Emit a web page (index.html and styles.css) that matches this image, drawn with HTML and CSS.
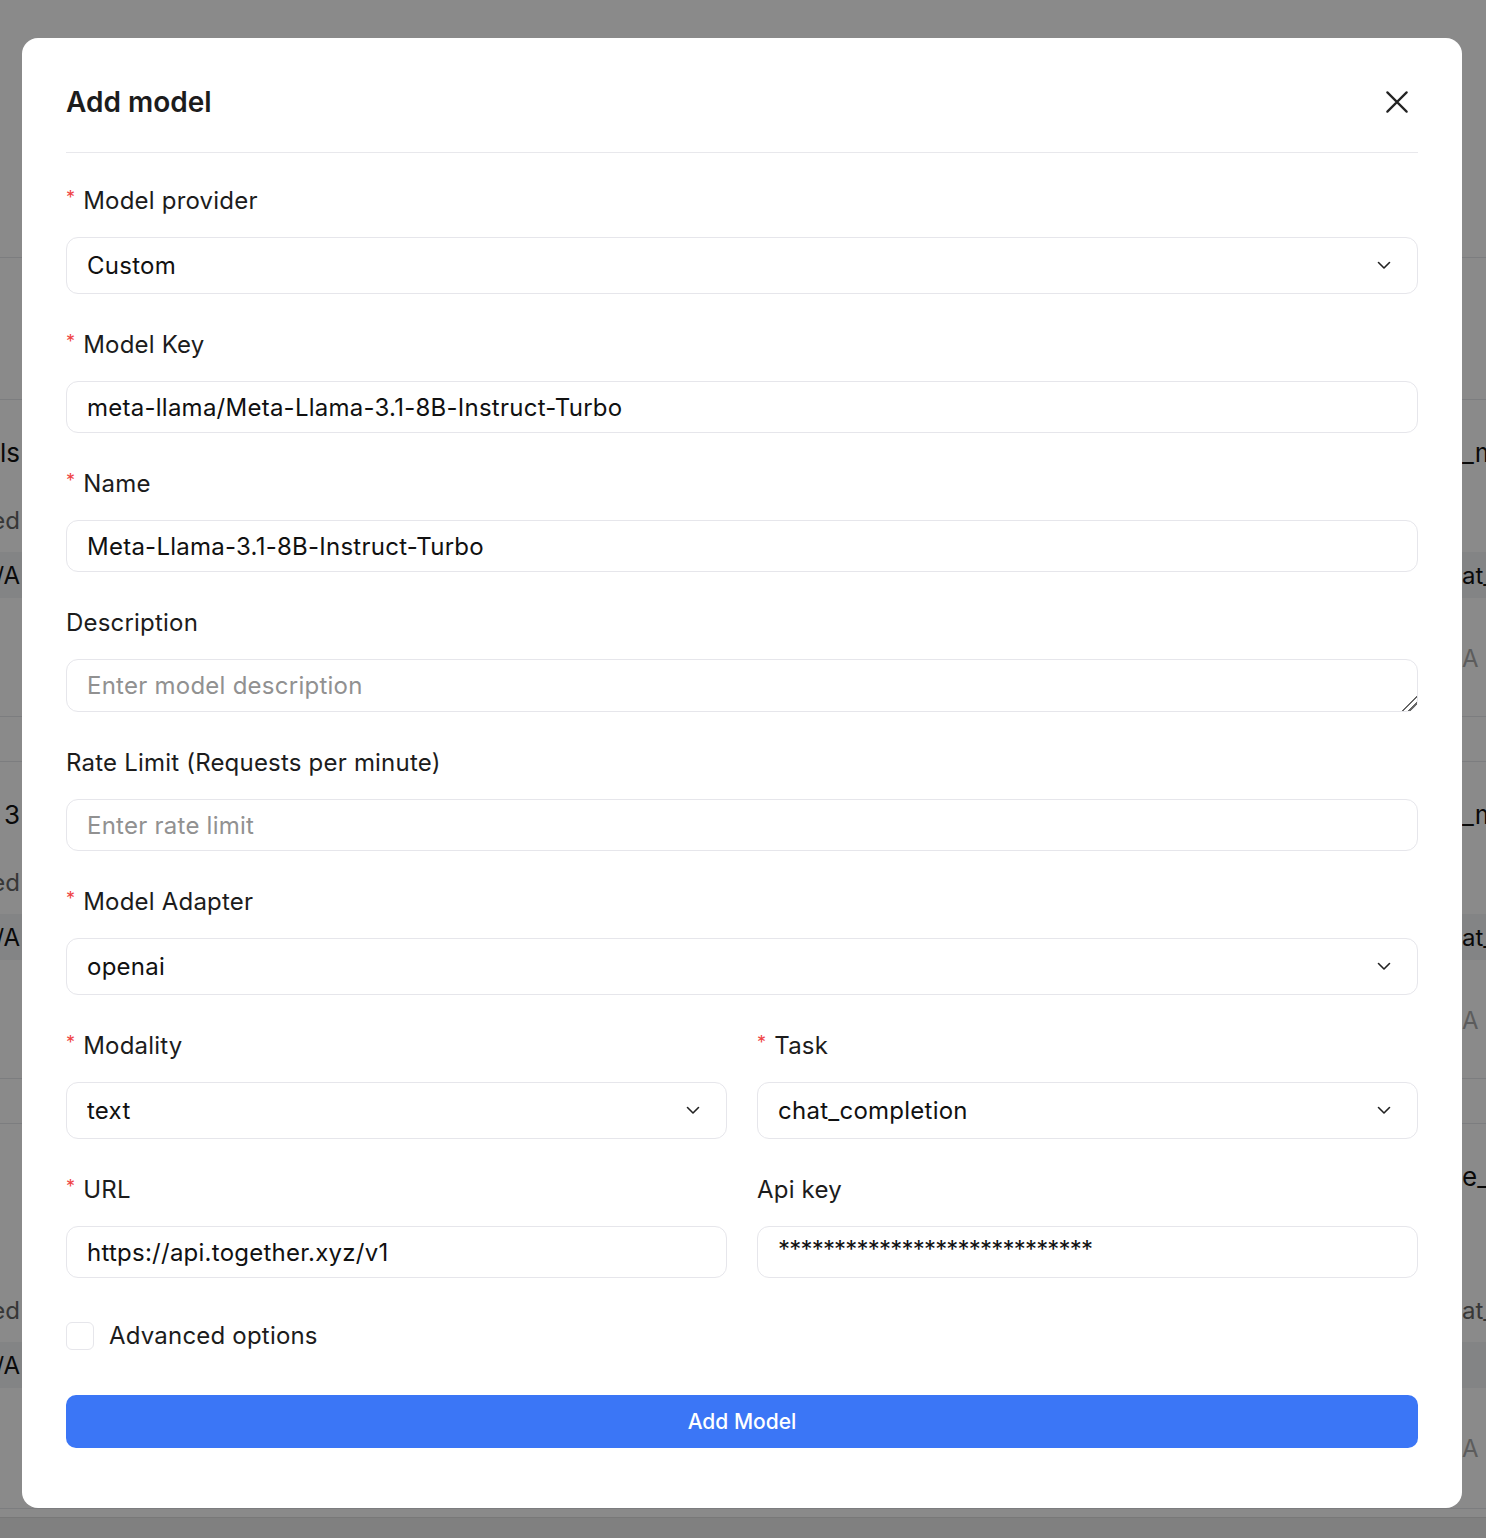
FILE: index.html
```html
<!DOCTYPE html>
<html lang="en">
<head>
    <meta charset="UTF-8">
    <meta name="viewport" content="width=device-width, initial-scale=1.0">
    <title>Add model</title>
    <link rel="stylesheet" href="styles.css">
</head>
<body>
    <!-- page behind the dialog -->
    <div class="page">
        <div class="page-top"></div>
        <div class="toolbar"></div>

        <div class="cards">
            <div class="card">
                <div class="bg-row bg-title">
                    <div class="edge-l"><span>Models</span></div>
                    <div class="edge-r"><span>_model</span></div>
                </div>
                <div class="bg-row bg-status">
                    <div class="edge-l"><span>Deployed</span></div>
                    <div class="edge-r"></div>
                </div>
                <div class="bg-row bg-band">
                    <div class="edge-l"><span>N/A</span></div>
                    <div class="edge-r"><span>at_completion</span></div>
                </div>
                <div class="bg-row bg-muted">
                    <div class="edge-l"></div>
                    <div class="edge-r"><span>A</span></div>
                </div>
            </div>
            <div class="card">
                <div class="bg-row bg-title">
                    <div class="edge-l"><span>Llama 3</span></div>
                    <div class="edge-r"><span>_model</span></div>
                </div>
                <div class="bg-row bg-status">
                    <div class="edge-l"><span>Deployed</span></div>
                    <div class="edge-r"></div>
                </div>
                <div class="bg-row bg-band">
                    <div class="edge-l"><span>N/A</span></div>
                    <div class="edge-r"><span>at_completion</span></div>
                </div>
                <div class="bg-row bg-muted">
                    <div class="edge-l"></div>
                    <div class="edge-r"><span>A</span></div>
                </div>
            </div>
            <div class="card card-tall">
                <div class="bg-row bg-title">
                    <div class="edge-l"></div>
                    <div class="edge-r"><span>e_model</span></div>
                </div>
                <div class="bg-row bg-spacer"></div>
                <div class="bg-row bg-status">
                    <div class="edge-l"><span>Deployed</span></div>
                    <div class="edge-r"><span>at_</span></div>
                </div>
                <div class="bg-row bg-band">
                    <div class="edge-l"><span>N/A</span></div>
                    <div class="edge-r"></div>
                </div>
                <div class="bg-row bg-muted">
                    <div class="edge-l"></div>
                    <div class="edge-r"><span>A</span></div>
                </div>
            </div>
        </div>
        <div class="page-foot"></div>
    </div>

    <div class="overlay">
        <div class="modal">
            <div class="modal-head">
                <h2 class="modal-title">Add model</h2>
                <button class="close-btn" type="button" aria-label="Close">
                    <svg width="24" height="24" viewBox="0 0 24 24" fill="none" stroke="#222" stroke-width="2.4" stroke-linecap="round">
                        <path d="M1.5 1.5L22.5 22.5M22.5 1.5L1.5 22.5"/>
                    </svg>
                </button>
            </div>

            <form class="modal-body">
                <div class="field">
                    <label class="label"><span class="req">*</span>Model provider</label>
                    <div class="select-wrap">
                        <select class="control select">
                            <option>Custom</option>
                        </select>
                        <svg class="chevron" width="16" height="16" viewBox="0 0 16 16" fill="none" stroke="#222" stroke-width="1.6" stroke-linecap="round" stroke-linejoin="round"><path d="M2.5 5.5L8 11l5.5-5.5"/></svg>
                    </div>
                </div>

                <div class="field">
                    <label class="label"><span class="req">*</span>Model Key</label>
                    <input class="control" type="text" value="meta-llama/Meta-Llama-3.1-8B-Instruct-Turbo">
                </div>

                <div class="field">
                    <label class="label"><span class="req">*</span>Name</label>
                    <input class="control" type="text" value="Meta-Llama-3.1-8B-Instruct-Turbo">
                </div>

                <div class="field">
                    <label class="label">Description</label>
                    <textarea class="control textarea" placeholder="Enter model description"></textarea>
                </div>

                <div class="field">
                    <label class="label">Rate Limit (Requests per minute)</label>
                    <input class="control" type="text" placeholder="Enter rate limit">
                </div>

                <div class="field">
                    <label class="label"><span class="req">*</span>Model Adapter</label>
                    <div class="select-wrap">
                        <select class="control select">
                            <option>openai</option>
                        </select>
                        <svg class="chevron" width="16" height="16" viewBox="0 0 16 16" fill="none" stroke="#222" stroke-width="1.6" stroke-linecap="round" stroke-linejoin="round"><path d="M2.5 5.5L8 11l5.5-5.5"/></svg>
                    </div>
                </div>

                <div class="field-row">
                    <div class="field">
                        <label class="label"><span class="req">*</span>Modality</label>
                        <div class="select-wrap">
                            <select class="control select">
                                <option>text</option>
                            </select>
                            <svg class="chevron" width="16" height="16" viewBox="0 0 16 16" fill="none" stroke="#222" stroke-width="1.6" stroke-linecap="round" stroke-linejoin="round"><path d="M2.5 5.5L8 11l5.5-5.5"/></svg>
                        </div>
                    </div>
                    <div class="field">
                        <label class="label"><span class="req">*</span>Task</label>
                        <div class="select-wrap">
                            <select class="control select">
                                <option>chat_completion</option>
                            </select>
                            <svg class="chevron" width="16" height="16" viewBox="0 0 16 16" fill="none" stroke="#222" stroke-width="1.6" stroke-linecap="round" stroke-linejoin="round"><path d="M2.5 5.5L8 11l5.5-5.5"/></svg>
                        </div>
                    </div>
                </div>

                <div class="field-row">
                    <div class="field">
                        <label class="label"><span class="req">*</span>URL</label>
                        <input class="control" type="text" value="https://api.together.xyz/v1">
                    </div>
                    <div class="field">
                        <label class="label">Api key</label>
                        <input class="control secret" type="text" value="****************************">
                    </div>
                </div>

                <label class="check-row">
                    <span class="checkbox"></span>
                    <span>Advanced options</span>
                </label>

                <button class="submit" type="button">Add Model</button>
            </form>
        </div>
    </div>
</body>
</html>
```

FILE: styles.css
```css
* {
    box-sizing: border-box;
}

body {
    margin: 0;
    height: 1538px;
    overflow: hidden;
    background: #fff;
    font-family: Inter, "Noto Sans", sans-serif;
    color: #1c1c1c;
}

/* background page */
.page {
    width: 100%;
}

.page-top {
    height: 258px;
    border-bottom: 1px solid #e5e7eb;
}

.toolbar {
    height: 141px;
}

.cards {
    display: flex;
    flex-direction: column;
    gap: 44px;
}

.card {
    height: 318px;
    border-top: 1px solid #e5e7eb;
    border-bottom: 1px solid #e5e7eb;
    padding-top: 34px;
}

.card-tall {
    height: 386px;
}

.bg-row {
    display: flex;
    justify-content: space-between;
    align-items: center;
    white-space: nowrap;
    overflow: hidden;
}

.edge-l {
    width: 20px;
    display: flex;
    justify-content: flex-end;
}

.edge-r {
    width: 24px;
    display: flex;
}

.bg-title {
    height: 36px;
    font-size: 26px;
    color: #111;
}

.bg-spacer {
    height: 66px;
}

.bg-status {
    height: 36px;
    margin-top: 32px;
    font-size: 24px;
    color: #666;
}

.bg-band {
    height: 46px;
    margin-top: 14px;
    background: #f3f4f6;
    font-size: 24px;
    color: #111;
}

.bg-muted {
    height: 36px;
    margin-top: 42px;
    font-size: 24px;
    color: #aaa;
}

.page-foot {
    height: 200px;
    margin-top: 8px;
    background: #ececec;
    border-top: 1px solid #dedede;
}

/* dialog */
.overlay {
    position: fixed;
    inset: 0;
    background: rgba(0, 0, 0, 0.46);
    display: flex;
    justify-content: center;
    align-items: flex-start;
    padding-top: 38px;
}

.modal {
    width: 1440px;
    margin-left: -2px;
    background: #fff;
    border-radius: 16px;
    padding: 0 44px 60px;
}

.modal-head {
    display: flex;
    justify-content: space-between;
    align-items: center;
    padding: 44px 0 30px;
    border-bottom: 1px solid #e8e8ec;
}

.modal-title {
    margin: 0;
    font-size: 28px;
    line-height: 40px;
    font-weight: 600;
    color: #1c1c1c;
}

.close-btn {
    width: 40px;
    height: 40px;
    margin-right: 1px;
    padding: 0;
    border: 0;
    background: none;
    display: flex;
    align-items: center;
    justify-content: center;
}

.close-btn svg {
    width: 22px;
    height: 22px;
}

.modal-body {
    display: flex;
    flex-direction: column;
    gap: 33px;
    padding-top: 30px;
}

.field {
    display: flex;
    flex-direction: column;
    gap: 18px;
    min-width: 0;
}

.field-row {
    display: grid;
    grid-template-columns: 1fr 1fr;
    gap: 30px;
}

.label {
    display: block;
    height: 36px;
    font-size: 24px;
    line-height: 36px;
    letter-spacing: 0.2px;
    color: #1c1c1c;
}

.req {
    color: #ef4444;
    font-size: 18px;
    line-height: 0;
    vertical-align: 5px;
    margin-right: 8px;
}

.control {
    width: 100%;
    height: 52px;
    padding: 0 20px;
    border: 1px solid #e6e6eb;
    border-radius: 12px;
    background: #fff;
    font-family: inherit;
    font-size: 24px;
    letter-spacing: 0.25px;
    color: #111;
    outline: none;
}

.control::placeholder {
    color: #919191;
}

.secret {
    letter-spacing: -0.8px;
    padding-bottom: 6px;
}

.textarea {
    display: block;
    height: 53px;
    min-height: 53px;
    padding-top: 11px;
    line-height: 30px;
    resize: vertical;
}

.textarea::-webkit-resizer {
    background: linear-gradient(135deg, transparent 0 48%, #666 48% 56%, transparent 56% 70%, #666 70% 78%, transparent 78%);
}

.select-wrap {
    position: relative;
}

.select {
    height: 57px;
    appearance: none;
    -webkit-appearance: none;
}

.chevron {
    position: absolute;
    right: 26px;
    top: 20px;
    pointer-events: none;
}

.check-row {
    display: flex;
    align-items: center;
    gap: 15px;
    margin-top: 11px;
    font-size: 24px;
    line-height: 28px;
    letter-spacing: 0.2px;
    color: #1c1c1c;
}

.checkbox {
    width: 28px;
    height: 28px;
    border: 1px solid #e6e6eb;
    border-radius: 6px;
    background: #fff;
}

.submit {
    height: 53px;
    margin-top: 12px;
    border: 0;
    border-radius: 10px;
    background: #3b76f6;
    color: #fff;
    font-family: inherit;
    font-size: 21px;
    font-weight: 500;
}
```
